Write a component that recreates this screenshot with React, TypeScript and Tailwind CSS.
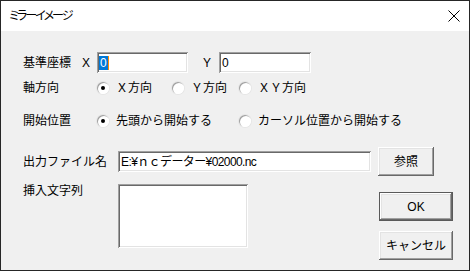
const font = "[font-family:'Liberation_Sans','Noto_Sans_CJK_JP',sans-serif]";

const raised =
  'bg-[#f0f0f0] shadow-[inset_-1px_-1px_0_#696969,inset_1px_1px_0_#ffffff,inset_-2px_-2px_0_#a0a0a0,inset_2px_2px_0_#e3e3e3]';
const sunken =
  'bg-white shadow-[inset_1px_1px_0_#a0a0a0,inset_-1px_-1px_0_#ffffff,inset_2px_2px_0_#696969,inset_-2px_-2px_0_#e3e3e3]';

function Radio({ checked, label, className }: { checked?: boolean; label: string; className?: string }) {
  return (
    <div className={`flex items-center ${className ?? ''}`}>
      <span className="w-[12px] h-[12px] rounded-full bg-white shrink-0 shadow-[inset_1px_1px_0_#a0a0a0,inset_-1px_-1px_0_#ffffff,0_0_0_1px_#e6e6e6] flex items-center justify-center">
        {checked && <span className="w-[4px] h-[4px] rounded-full bg-black" />}
      </span>
      <span className="ml-[7px]">{label}</span>
    </div>
  );
}

export default function App() {
  return (
    <div className={`w-[470px] h-[271px] border border-[#262626] bg-[#f0f0f0] text-[12px] leading-[16px] text-black ${font}`}>
      <div className="h-[30px] bg-white flex items-center justify-between pl-[8px] pr-[8px]">
        <span className="[font-feature-settings:'palt'] tracking-[-2px]">ミラーイメージ</span>
        <svg width="12" height="12" viewBox="0 0 12 12" className="mr-[1px]">
          <path d="M0.5 0.5 L11.5 11.5 M11.5 0.5 L0.5 11.5" stroke="#000" strokeWidth="1" fill="none" />
        </svg>
      </div>

      <div className="pl-[22px] flex flex-col">
        <div className="mt-[21px] h-[21px] flex items-center">
          <span className="w-[59px]">基準座標</span>
          <span className="w-[15px]">X</span>
          <div className={`w-[91px] h-[21px] ${sunken} flex items-center pl-[2px]`}>
            <span className="bg-[#0078d7] text-white px-[1px] leading-[14px]">0</span>
            <span className="w-[1px] h-[14px] bg-[#ff8a00]" />
          </div>
          <span className="ml-[15px] w-[16px]">Y</span>
          <div className={`w-[92px] h-[21px] ${sunken} flex items-center pl-[3px]`}>0</div>
        </div>

        <div className="mt-[5px] h-[20px] flex items-center">
          <span className="w-[74px]">軸方向</span>
          <Radio checked label="Ｘ方向" className="w-[75px]" />
          <Radio label="Ｙ方向" className="w-[67px]" />
          <Radio label="ＸＹ方向" />
        </div>

        <div className="mt-[13px] h-[20px] flex items-center">
          <span className="w-[74px]">開始位置</span>
          <Radio checked label="先頭から開始する" className="w-[142px]" />
          <Radio label="カーソル位置から開始する" />
        </div>

        <div className="mt-[16px] h-[29px] flex items-center">
          <span className="w-[95px]">出力ファイル名</span>
          <div className={`w-[253px] h-[21px] ${sunken} flex items-center pl-[3px] tracking-[-0.6px]`}>
            E:¥ｎｃデーター¥02000.nc
          </div>
          <button className={`ml-[7px] w-[56px] h-[29px] ${raised}`}>参照</button>
        </div>

        <div className="mt-[8px] flex">
          <span className="w-[95px] mt-[-1px]">挿入文字列</span>
          <div className={`w-[130px] h-[64px] ${sunken}`} />
          <div className="ml-[131px] mt-[8px] flex flex-col gap-[10px]">
            <button className={`w-[74px] h-[29px] border border-[#5a5a5a] ${raised}`}>OK</button>
            <button className={`w-[74px] h-[29px] ${raised}`}>キャンセル</button>
          </div>
        </div>
      </div>
    </div>
  );
}
